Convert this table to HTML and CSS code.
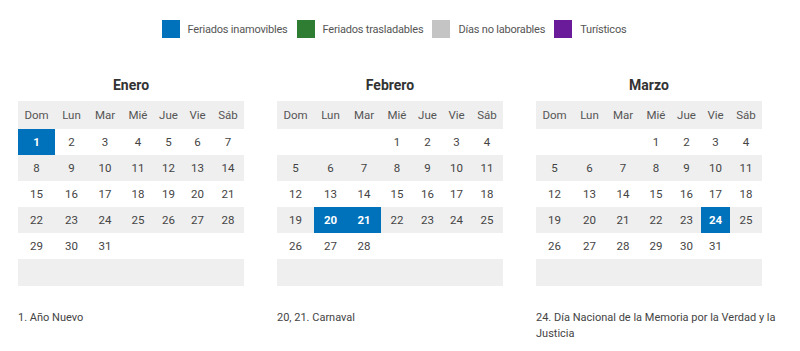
FILE: index.html
```html
<!DOCTYPE html>
<html lang="es">
<head>
<meta charset="utf-8">
<title>Feriados</title>
<link rel="stylesheet" href="styles.css">
</head>
<body>
<div class="page">
  <ul class="legend">
    <li class="legend-item"><span class="swatch inamovible"></span>Feriados inamovibles</li>
    <li class="legend-item"><span class="swatch trasladable"></span>Feriados trasladables</li>
    <li class="legend-item"><span class="swatch nolaborable"></span>Días no laborables</li>
    <li class="legend-item"><span class="swatch turistico"></span>Turísticos</li>
  </ul>

  <div class="months">
    <section class="month">
      <h3 class="month-title">Enero</h3>
      <div class="cal">
        <div class="row head"><span>Dom</span><span>Lun</span><span>Mar</span><span>Mié</span><span>Jue</span><span>Vie</span><span>Sáb</span></div>
        <div class="row"><span class="hol">1</span><span>2</span><span>3</span><span>4</span><span>5</span><span>6</span><span>7</span></div>
        <div class="row alt"><span>8</span><span>9</span><span>10</span><span>11</span><span>12</span><span>13</span><span>14</span></div>
        <div class="row"><span>15</span><span>16</span><span>17</span><span>18</span><span>19</span><span>20</span><span>21</span></div>
        <div class="row alt"><span>22</span><span>23</span><span>24</span><span>25</span><span>26</span><span>27</span><span>28</span></div>
        <div class="row"><span>29</span><span>30</span><span>31</span><span></span><span></span><span></span><span></span></div>
        <div class="row alt"><span></span><span></span><span></span><span></span><span></span><span></span><span></span></div>
      </div>
      <p class="note">1. Año Nuevo</p>
    </section>

    <section class="month">
      <h3 class="month-title">Febrero</h3>
      <div class="cal">
        <div class="row head"><span>Dom</span><span>Lun</span><span>Mar</span><span>Mié</span><span>Jue</span><span>Vie</span><span>Sáb</span></div>
        <div class="row"><span></span><span></span><span></span><span>1</span><span>2</span><span>3</span><span>4</span></div>
        <div class="row alt"><span>5</span><span>6</span><span>7</span><span>8</span><span>9</span><span>10</span><span>11</span></div>
        <div class="row"><span>12</span><span>13</span><span>14</span><span>15</span><span>16</span><span>17</span><span>18</span></div>
        <div class="row alt"><span>19</span><span class="hol">20</span><span class="hol">21</span><span>22</span><span>23</span><span>24</span><span>25</span></div>
        <div class="row"><span>26</span><span>27</span><span>28</span><span></span><span></span><span></span><span></span></div>
        <div class="row alt"><span></span><span></span><span></span><span></span><span></span><span></span><span></span></div>
      </div>
      <p class="note">20, 21. Carnaval</p>
    </section>

    <section class="month">
      <h3 class="month-title">Marzo</h3>
      <div class="cal">
        <div class="row head"><span>Dom</span><span>Lun</span><span>Mar</span><span>Mié</span><span>Jue</span><span>Vie</span><span>Sáb</span></div>
        <div class="row"><span></span><span></span><span></span><span>1</span><span>2</span><span>3</span><span>4</span></div>
        <div class="row alt"><span>5</span><span>6</span><span>7</span><span>8</span><span>9</span><span>10</span><span>11</span></div>
        <div class="row"><span>12</span><span>13</span><span>14</span><span>15</span><span>16</span><span>17</span><span>18</span></div>
        <div class="row alt"><span>19</span><span>20</span><span>21</span><span>22</span><span>23</span><span class="hol">24</span><span>25</span></div>
        <div class="row"><span>26</span><span>27</span><span>28</span><span>29</span><span>30</span><span>31</span><span></span></div>
        <div class="row alt"><span></span><span></span><span></span><span></span><span></span><span></span><span></span></div>
      </div>
      <p class="note">24. Día Nacional de la Memoria por la Verdad y la Justicia</p>
    </section>
  </div>
</div>
</body>
</html>
```

FILE: styles.css
```css
* { box-sizing: border-box; }

body {
  margin: 0;
  background: #fff;
  color: #333;
  font-family: "Roboto", "Open Sans", sans-serif;
}

.page {
  width: 800px;
  height: 351px;
  overflow: hidden;
}

.legend {
  list-style: none;
  margin: 0;
  padding: 20px 12px 0 0;
  display: flex;
  justify-content: center;
  gap: 9px;
  height: 38px;
}

.legend-item {
  display: flex;
  align-items: center;
  gap: 8px;
  height: 18px;
  font-size: 11px;
  letter-spacing: -0.2px;
  color: #555;
}

.swatch {
  display: block;
  width: 18px;
  height: 18px;
}
.inamovible { background: #0072bb; }
.trasladable { background: #2e7d33; }
.nolaborable { background: #c4c4c4; }
.turistico { background: #6a1b99; }

.months {
  display: grid;
  grid-template-columns: repeat(3, 226px);
  column-gap: 33px;
  padding: 0 0 0 18px;
  margin-top: 37px;
}

.month-title {
  margin: 0;
  height: 26px;
  text-align: center;
  font-size: 14px;
  font-weight: 700;
  color: #333;
  line-height: 21px;
}

.cal {
  display: flex;
  flex-direction: column;
}

.row {
  display: grid;
  grid-template-columns: 37px 33px 34px 32px 29px 29px 32px;
  height: 26px;
  align-items: center;
  text-align: center;
  font-size: 11.5px;
  color: #444;
}

.row.head {
  height: 28px;
  background: #efefef;
  color: #555;
}

.row.alt { background: #efefef; }
.row:last-child { height: 27px; }

.row span {
  height: 100%;
  display: flex;
  align-items: center;
  justify-content: center;
}

.row span.hol {
  background: #0072bb;
  color: #fff;
  font-weight: 700;
}

.note {
  margin: 24px 0 0;
  width: 243px;
  font-size: 11px;
  line-height: 16px;
  color: #444;
}
```
